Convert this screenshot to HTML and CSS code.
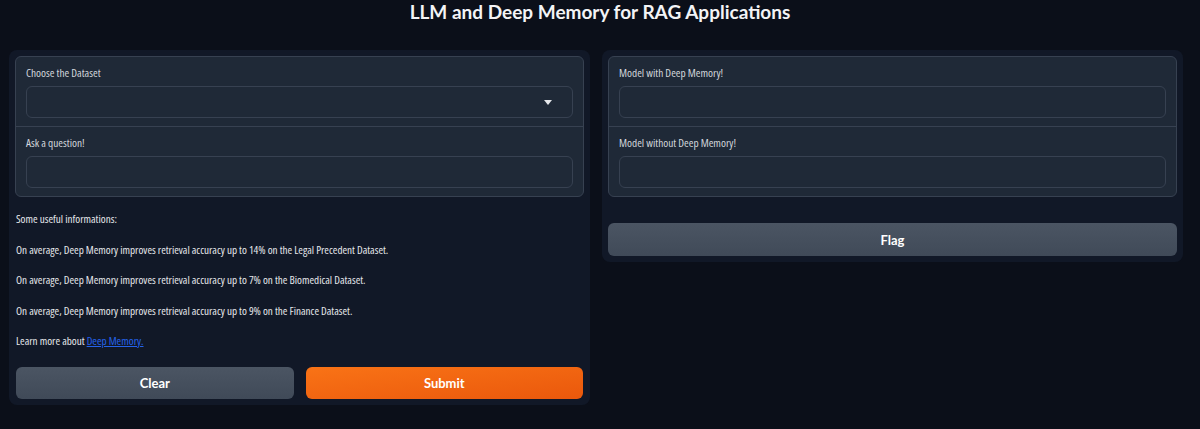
FILE: index.html
```html
<!DOCTYPE html>
<html lang="en">
<head>
<meta charset="utf-8">
<title>LLM and Deep Memory for RAG Applications</title>
<link rel="stylesheet" href="styles.css">
</head>
<body>
<h1 class="title">LLM and Deep Memory for RAG Applications</h1>
<div class="row">
  <div class="panel">
    <div class="block">
      <div class="section">
        <label class="label">Choose the Dataset</label>
        <div class="input dropdown">
          <svg class="caret" width="8" height="5" viewBox="0 0 8 5"><path d="M0 0H8L4 5Z" fill="#e5e7eb"/></svg>
        </div>
      </div>
      <div class="section divided">
        <label class="label">Ask a question!</label>
        <div class="input"></div>
      </div>
    </div>
    <div class="markdown">
      <p>Some useful informations:</p>
      <p>On average, Deep Memory improves retrieval accuracy up to 14% on the Legal Precedent Dataset.</p>
      <p>On average, Deep Memory improves retrieval accuracy up to 7% on the Biomedical Dataset.</p>
      <p>On average, Deep Memory improves retrieval accuracy up to 9% on the Finance Dataset.</p>
      <p>Learn more about <a class="link" href="#">Deep Memory.</a></p>
    </div>
    <div class="buttons">
      <button class="btn secondary">Clear</button>
      <button class="btn primary">Submit</button>
    </div>
  </div>
  <div class="panel right">
    <div class="block">
      <div class="section">
        <label class="label">Model with Deep Memory!</label>
        <div class="input"></div>
      </div>
      <div class="section divided">
        <label class="label">Model without Deep Memory!</label>
        <div class="input"></div>
      </div>
    </div>
    <button class="btn secondary flag">Flag</button>
  </div>
</div>
</body>
</html>
```

FILE: styles.css
```css
* { box-sizing: border-box; }
html, body { margin: 0; padding: 0; }
body {
  background: #0b0f19;
  color: #e5e7eb;
  font-family: "Open Sans", "Liberation Sans", sans-serif;
  font-stretch: 78%;
  font-size: 11.3px;
  height: 429px;
  overflow: hidden;
}
.title {
  margin: 0;
  padding-top: 1px;
  height: 50px;
  line-height: 22px;
  text-align: center;
  font-family: "Lato", "Liberation Sans", sans-serif;
  font-stretch: normal;
  font-size: 19px;
  font-weight: 700;
  color: #f3f4f6;
}
.row {
  display: flex;
  align-items: flex-start;
  gap: 12px;
  padding: 0 17px 0 9px;
}
.panel {
  flex: 1;
  background: #111827;
  border-radius: 8px;
  padding: 6px;
  display: flex;
  flex-direction: column;
}
.block {
  background: #1f2937;
  border: 1px solid #374151;
  border-radius: 6px;
}
.section {
  padding: 8px 10px 8px;
  display: flex;
  flex-direction: column;
}
.section.divided { border-top: 1px solid #374151; }
.label {
  line-height: 16px;
  margin-bottom: 5px;
  color: #d1d5db;
}
.input {
  height: 32px;
  background: #1f2937;
  border: 1px solid #374151;
  border-radius: 6px;
}
.dropdown {
  display: flex;
  align-items: center;
  justify-content: flex-end;
  padding-right: 20px;
}
.markdown {
  padding: 13px 1px 0;
  font-size: 11.15px;
}
.markdown p {
  margin: 0 0 12.5px;
  line-height: 18px;
}
.link { color: #2563eb; text-decoration: underline; }
.buttons {
  display: flex;
  gap: 12px;
  margin-top: 4px;
  padding: 0 1px;
}
.btn {
  flex: 1;
  height: 32px;
  border: none;
  border-radius: 6px;
  font-family: "Lato", "Liberation Sans", sans-serif;
  font-stretch: normal;
  font-size: 13px;
  font-weight: 700;
  color: #ffffff;
}
.secondary { background: linear-gradient(to bottom, #4b5563, #404a58); }
.primary { background: linear-gradient(to bottom right, #f97316, #ea580c); }
.flag {
  flex: none;
  height: 33px;
  margin-top: 26px;
}
```
